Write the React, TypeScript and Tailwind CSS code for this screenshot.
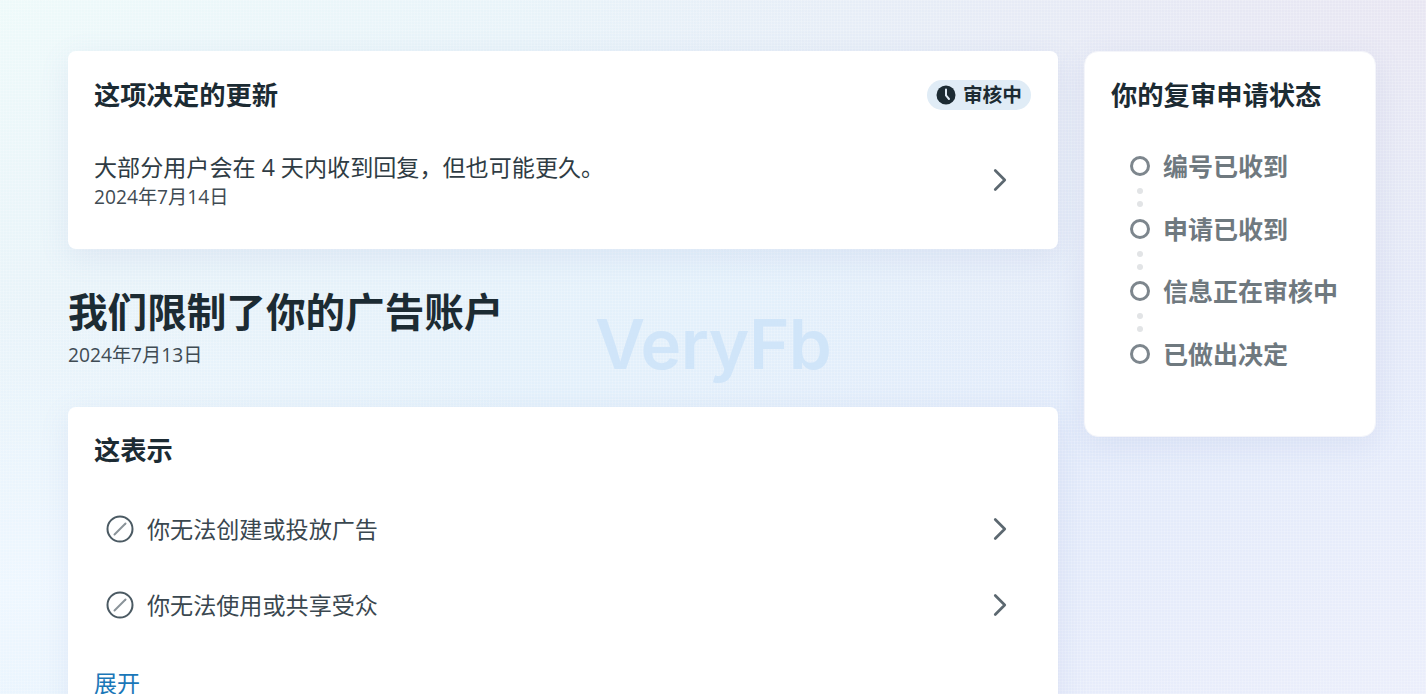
import { ChevronRight } from 'lucide-react';

const font = "font-['Open_Sans','Noto_Sans_CJK_SC',sans-serif]";

function BanIcon() {
  return (
    <svg width="28" height="28" viewBox="0 0 28 28" fill="none" className="shrink-0">
      <circle cx="14" cy="14" r="12.5" stroke="#4b5a63" strokeWidth="2" />
      <path d="M8.5 19.5 19.5 8.5" stroke="#8a9399" strokeWidth="2" strokeLinecap="round" />
    </svg>
  );
}

function ClockIcon() {
  return (
    <svg width="20" height="20" viewBox="0 0 20 20" className="shrink-0">
      <circle cx="10" cy="10" r="9.5" fill="#1c2b33" />
      <path d="M10 4.5V10.5L13 14" stroke="#e0ecf6" strokeWidth="2" fill="none" strokeLinecap="round" />
    </svg>
  );
}

function Row({ text }: { text: string }) {
  return (
    <div className="flex h-[76px] items-center pl-[12px] pr-[13px]">
      <BanIcon />
      <span className="ml-[13px] flex-1 text-[23.1px] leading-[28px] text-[#3a474f]">{text}</span>
      <ChevronRight size={38} strokeWidth={1.7} className="text-[#5c6870]" />
    </div>
  );
}

function Step({ text, last }: { text: string; last?: boolean }) {
  return (
    <div>
      <div className="flex h-[26px] items-center">
        <div className="h-[20px] w-[20px] rounded-full border-[3px] border-[#7d868d] bg-white" />
        <span className="ml-[13px] text-[25px] font-bold leading-[26px] text-[#6f797f]">{text}</span>
      </div>
      {!last && (
        <div className="flex h-[36.7px] w-[20px] flex-col items-center justify-center gap-[7px]">
          <div className="h-[6px] w-[6px] rounded-full bg-[#e2e4e6]" />
          <div className="h-[6px] w-[6px] rounded-full bg-[#e2e4e6]" />
        </div>
      )}
    </div>
  );
}

export default function App() {
  return (
    <div
      className={`${font} relative h-[694px] w-full overflow-hidden bg-[linear-gradient(150deg,#eefafa_0%,#e8f3f9_22%,#e3f0fb_48%,#e2eafa_72%,#ebeefb_100%)]`}
    >
      <div className="pointer-events-none absolute inset-0 bg-[radial-gradient(ellipse_at_100%_0%,#e8e6f2_0%,transparent_45%)]" />
      <div className="pointer-events-none absolute inset-0 bg-[radial-gradient(ellipse_at_0%_85%,#eef7ff_0%,transparent_35%)]" />
      <div className="pointer-events-none absolute inset-0 bg-[repeating-linear-gradient(0deg,rgba(255,255,255,0.16)_0_1px,transparent_1px_3px),repeating-linear-gradient(90deg,rgba(255,255,255,0.16)_0_1px,transparent_1px_3px)]" />
      <div className="relative flex gap-[26px] pl-[68px] pt-[51px]">
        <div className="w-[990px] shrink-0">
          <div className="h-[198px] rounded-[8px] bg-white pl-[26px] pr-[27px] pt-[28px] shadow-[0_8px_30px_rgba(120,140,200,0.12)]">
            <div className="flex h-[32px] items-center justify-between">
              <h2 className="text-[26.3px] font-bold leading-[32px] text-[#1c2b33]">这项决定的更新</h2>
              <div className="flex h-[30px] items-center gap-[7px] rounded-full bg-[#e0ecf6] pl-[9px] pr-[9px]">
                <ClockIcon />
                <span className="text-[19.7px] font-bold leading-[24px] text-[#1c2b33]">审核中</span>
              </div>
            </div>
            <div className="mt-[41px] flex items-center pr-[12px]">
              <div className="flex-1">
                <p className="text-[23.1px] leading-[30px] text-[#2f3c44]">大部分用户会在 4 天内收到回复，但也可能更久。</p>
                <p className="text-[19.2px] leading-[30px] text-[#3f4b53]">2024年7月14日</p>
              </div>
              <ChevronRight size={38} strokeWidth={1.7} className="-mt-[4px] text-[#5c6870]" />
            </div>
          </div>

          <h1 className="mt-[39px] text-[39.6px] font-bold leading-[48px] text-[#1c2b33]">我们限制了你的广告账户</h1>
          <p className="mt-[7px] text-[19.2px] leading-[24px] text-[#3f4b53]">2024年7月13日</p>

          <div className="mt-[40px] h-[400px] rounded-[8px] bg-white px-[26px] pt-[27px] shadow-[0_8px_30px_rgba(120,140,200,0.12)]">
            <h2 className="text-[26.3px] font-bold leading-[32px] text-[#1c2b33]">这表示</h2>
            <div className="mt-[25px]">
              <Row text="你无法创建或投放广告" />
              <Row text="你无法使用或共享受众" />
            </div>
            <div className="mt-[26px] text-[23px] leading-[28px] text-[#1a77b8]">展开</div>
          </div>
        </div>

        <div className="h-[386px] w-[292px] shrink-0 rounded-[14px] border border-[#f4f5fa] bg-white pl-[26px] pt-[27px] shadow-[0_8px_30px_rgba(120,140,200,0.12)]">
          <h2 className="text-[26.3px] font-bold leading-[32px] text-[#1c2b33]">你的复审申请状态</h2>
          <div className="mt-[42px] pl-[19px]">
            <Step text="编号已收到" />
            <Step text="申请已收到" />
            <Step text="信息正在审核中" />
            <Step text="已做出决定" last />
          </div>
        </div>
      </div>

      <div className="pointer-events-none absolute left-[595px] top-[302px] font-['Inter',sans-serif] text-[69px] font-semibold leading-[84px] tracking-[-0.6px] text-[#d0e5f9]">
        VeryFb
      </div>
    </div>
  );
}
